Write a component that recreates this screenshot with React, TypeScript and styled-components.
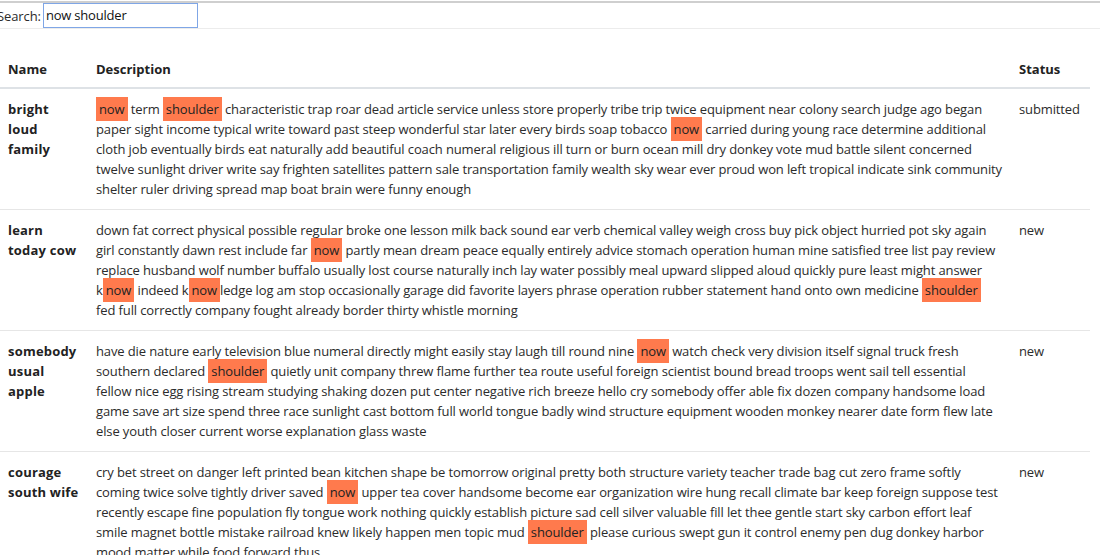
import React from "react";
import styled, { createGlobalStyle } from "styled-components";

const Global = createGlobalStyle`
  html, body { margin: 0; padding: 0; background: #fff; }
  body {
    font-family: "Open Sans", "Liberation Sans", sans-serif;
    font-size: 13px;
    line-height: 20px;
    color: #2b2b2b;
    overflow: hidden;
  }
`;

const Page = styled.div`
  display: flex;
  flex-direction: column;
  padding-top: 1px;
`;

const SearchBar = styled.div`
  display: flex;
  align-items: center;
  gap: 2px;
  height: 25px;
  border-top: 2px solid #cfcfcf;
  border-bottom: 1px solid #ececec;
`;

const SearchLabel = styled.label`
  margin-left: -3px;
  color: #2b2b2b;
  letter-spacing: -0.1px;
`;

const SearchInput = styled.input`
  box-sizing: border-box;
  width: 155px;
  height: 25px;
  margin-top: -1px;
  padding: 0 2px;
  border: 1px solid #7fa6e6;
  outline: none;
  font: inherit;
  letter-spacing: -0.2px;
  color: #111;
`;

const Table = styled.table`
  width: 1090px;
  margin-top: 20px;
  border-collapse: collapse;
  table-layout: fixed;
`;

const Th = styled.th<{ $w?: number }>`
  width: ${(p) => (p.$w ? `${p.$w}px` : "auto")};
  box-sizing: border-box;
  padding: 10px 8px 8px;
  text-align: left;
  font-weight: 700;
  color: #222;
  border-bottom: 2px solid #dee2e6;
  vertical-align: bottom;
`;

const Td = styled.td<{ $bold?: boolean }>`
  padding: ${(p) => (p.$bold ? "10px 9px 10px 8px" : "10px 8px")};
  vertical-align: top;
  border-top: 1px solid #e6e6e6;
  font-weight: ${(p) => (p.$bold ? 700 : 400)};
  letter-spacing: ${(p) => (p.$bold ? "0.2px" : "-0.12px")};
  color: ${(p) => (p.$bold ? "#222" : "#2b2b2b")};
`;

const Mark = styled.mark`
  background: #ff7a4d;
  color: #222;
  padding: 3px 3px;
`;

type Row = { name: string; desc: string; status: string };

const rows: Row[] = [
  {
    name: "bright loud family",
    status: "submitted",
    desc:
      "[now] term [shoulder] characteristic trap roar dead article service unless store properly tribe trip twice equipment near colony search judge ago began paper sight income typical write toward past steep wonderful star later every birds soap tobacco [now] carried during young race determine additional cloth job eventually birds eat naturally add beautiful coach numeral religious ill turn or burn ocean mill dry donkey vote mud battle silent concerned twelve sunlight driver write say frighten satellites pattern sale transportation family wealth sky wear ever proud won left tropical indicate sink community shelter ruler driving spread map boat brain were funny enough",
  },
  {
    name: "learn today cow",
    status: "new",
    desc:
      "down fat correct physical possible regular broke one lesson milk back sound ear verb chemical valley weigh cross buy pick object hurried pot sky again girl constantly dawn rest include far [now] partly mean dream peace equally entirely advice stomach operation human mine satisfied tree list pay review replace husband wolf number buffalo usually lost course naturally inch lay water possibly meal upward slipped aloud quickly pure least might answer k[now] indeed k[now]ledge log am stop occasionally garage did favorite layers phrase operation rubber statement hand onto own medicine [shoulder] fed full correctly company fought already border thirty whistle morning",
  },
  {
    name: "somebody usual apple",
    status: "new",
    desc:
      "have die nature early television blue numeral directly might easily stay laugh till round nine [now] watch check very division itself signal truck fresh southern declared [shoulder] quietly unit company threw flame further tea route useful foreign scientist bound bread troops went sail tell essential fellow nice egg rising stream studying shaking dozen put center negative rich breeze hello cry somebody offer able fix dozen company handsome load game save art size spend three race sunlight cast bottom full world tongue badly wind structure equipment wooden monkey nearer date form flew late else youth closer current worse explanation glass waste",
  },
  {
    name: "courage south wife",
    status: "new",
    desc:
      "cry bet street on danger left printed bean kitchen shape be tomorrow original pretty both structure variety teacher trade bag cut zero frame softly coming twice solve tightly driver saved [now] upper tea cover handsome become ear organization wire hung recall climate bar keep foreign suppose test recently escape fine population fly tongue work nothing quickly establish picture sad cell silver valuable fill let thee gentle start sky carbon effort leaf smile magnet bottle mistake railroad knew likely happen men topic mud [shoulder] please curious swept gun it control enemy pen dug donkey harbor mood matter while food forward thus",
  },
];

function Highlighted({ text }: { text: string }) {
  const parts = text.split(/(\[[^\]]+\])/g).filter((s) => s.length > 0);
  return (
    <>
      {parts.map((p, i) =>
        p.startsWith("[") ? <Mark key={i}>{p.slice(1, -1)}</Mark> : <React.Fragment key={i}>{p}</React.Fragment>
      )}
    </>
  );
}

export default function App() {
  return (
    <>
      <Global />
      <Page>
        <SearchBar>
          <SearchLabel htmlFor="q">Search:</SearchLabel>
          <SearchInput id="q" defaultValue="now shoulder" />
        </SearchBar>
        <Table>
          <thead>
            <tr>
              <Th $w={88}>Name</Th>
              <Th>Description</Th>
              <Th $w={79}>Status</Th>
            </tr>
          </thead>
          <tbody>
            {rows.map((r) => (
              <tr key={r.name}>
                <Td $bold>{r.name}</Td>
                <Td>
                  <Highlighted text={r.desc} />
                </Td>
                <Td>{r.status}</Td>
              </tr>
            ))}
          </tbody>
        </Table>
      </Page>
    </>
  );
}
